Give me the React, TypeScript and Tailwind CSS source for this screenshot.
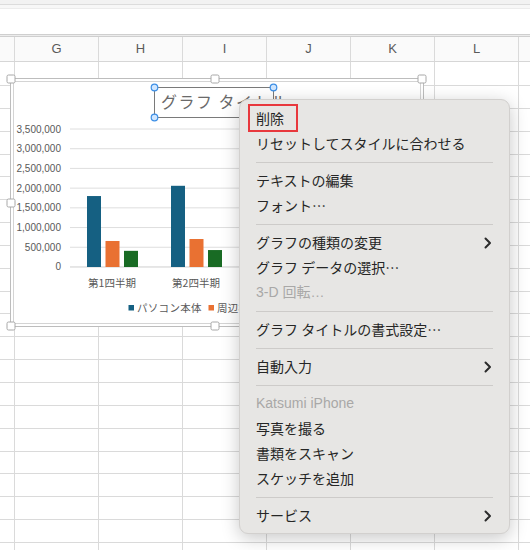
import React from 'react';

const FONT = '"Liberation Sans", "Noto Sans CJK JP", sans-serif';
const JP = '"Noto Sans CJK JP", "Liberation Sans", sans-serif';

const columns = ['G', 'H', 'I', 'J', 'K', 'L', ''];

type MenuEntry =
  | { kind: 'item'; label: string; disabled?: boolean; sub?: boolean; boxed?: boolean }
  | { kind: 'sep' };

const menu: MenuEntry[] = [
  { kind: 'item', label: '削除', boxed: true },
  { kind: 'item', label: 'リセットしてスタイルに合わせる' },
  { kind: 'sep' },
  { kind: 'item', label: 'テキストの編集' },
  { kind: 'item', label: 'フォント…' },
  { kind: 'sep' },
  { kind: 'item', label: 'グラフの種類の変更', sub: true },
  { kind: 'item', label: 'グラフ データの選択…' },
  { kind: 'item', label: '3-D 回転…', disabled: true },
  { kind: 'sep' },
  { kind: 'item', label: 'グラフ タイトルの書式設定…' },
  { kind: 'sep' },
  { kind: 'item', label: '自動入力', sub: true },
  { kind: 'sep' },
  { kind: 'item', label: 'Katsumi iPhone', disabled: true },
  { kind: 'item', label: '写真を撮る' },
  { kind: 'item', label: '書類をスキャン' },
  { kind: 'item', label: 'スケッチを追加' },
  { kind: 'sep' },
  { kind: 'item', label: 'サービス', sub: true },
];

const yLabels = ['3,500,000', '3,000,000', '2,500,000', '2,000,000', '1,500,000', '1,000,000', '500,000', '0'];

// bar values in millions
const quarters = [
  { label: '第1四半期', x: 87, values: [1.8, 0.66, 0.41] },
  { label: '第2四半期', x: 171, values: [2.06, 0.71, 0.43] },
];
const barColors = ['#156082', '#e97132', '#196b24'];

function Chevron() {
  return (
    <svg width="8" height="12" viewBox="0 0 8 12">
      <path d="M1.5 1.5 L6 6 L1.5 10.5" fill="none" stroke="#2b2b2b" strokeWidth="2" strokeLinecap="round" strokeLinejoin="round" />
    </svg>
  );
}

function Handle({ x, y }: { x: number; y: number }) {
  return <rect x={x - 4} y={y - 4} width="8" height="8" rx="1.5" fill="#fff" stroke="#a8a8a8" strokeWidth="1" />;
}

function Chart() {
  const zeroY = 267;
  const step = 19.71;
  const perMillion = (step * 7) / 3.5;
  return (
    <svg className="absolute left-0 top-0" width="430" height="335" viewBox="0 0 430 335">
      <rect x="11" y="79" width="412" height="247" fill="#fff" />
      <rect x="10.5" y="78.5" width="413" height="248" fill="none" stroke="#bdbdbd" />
      <rect x="13.5" y="81.5" width="407" height="242" fill="none" stroke="#d4d4d4" />
      {yLabels.map((l, i) => {
        const y = 129 + i * step;
        return (
          <g key={l}>
            <line x1="70" x2="410" y1={y} y2={y} stroke={i === 7 ? '#cfcfcf' : '#dedede'} strokeWidth="1" />
            <text x="61" y={y + 3.5} textAnchor="end" fontSize="10" fill="#595959" fontFamily={FONT}>
              {l}
            </text>
          </g>
        );
      })}
      {quarters.map((q) => (
        <g key={q.label}>
          {q.values.map((v, i) => {
            const h = v * perMillion;
            return <rect key={i} x={q.x + i * 18.5} y={zeroY - h} width="14" height={h} fill={barColors[i]} />;
          })}
          <text x={q.x + 25} y="287" textAnchor="middle" fontSize="10.5" fill="#595959" fontFamily={JP}>
            {q.label}
          </text>
        </g>
      ))}
      <rect x="128.5" y="305" width="5.5" height="5.5" fill="#156082" />
      <text x="137" y="312" fontSize="10.5" fill="#595959" fontFamily={JP} letterSpacing="0.3">
        パソコン本体
      </text>
      <rect x="208.5" y="305" width="5.5" height="5.5" fill="#e97132" />
      <text x="217" y="312" fontSize="10.5" fill="#595959" fontFamily={JP} letterSpacing="0.3">
        周辺機器
      </text>
      {/* title box */}
      <rect x="154.5" y="87.5" width="119" height="30" fill="none" stroke="#7a7a7a" />
      <text x="161" y="108" fontSize="16" fill="#6a6a6a" fontFamily={JP} letterSpacing="1.5">
        グラフ タイトル
      </text>
      {[
        [154.5, 87.5],
        [273.5, 87.5],
        [154.5, 117.5],
        [273.5, 117.5],
      ].map(([cx, cy], i) => (
        <circle key={i} cx={cx} cy={cy} r="3.3" fill="#cfe6ff" stroke="#3d8fe6" strokeWidth="1.2" />
      ))}
      <Handle x={11} y={79} />
      <Handle x={215} y={79} />
      <Handle x={422} y={79} />
      <Handle x={11} y={203} />
      <Handle x={422} y={203} />
      <Handle x={11} y={326} />
      <Handle x={215} y={326} />
      <Handle x={422} y={326} />
    </svg>
  );
}

function ContextMenu() {
  return (
    <div
      className="absolute left-[239px] top-[99px] w-[271px] rounded-[9px] border border-[#d2d0ce] bg-[#e7e6e4] pt-[6px] pb-[5px] shadow-[0_4px_18px_rgba(0,0,0,0.22)]"
      style={{ fontFamily: JP }}
    >
      {menu.map((m, i) =>
        m.kind === 'sep' ? (
          <div key={i} className="flex h-[12px] items-center px-[16px]">
            <div className="h-px w-[240px] bg-[#cdcbc9]" />
          </div>
        ) : (
          <div
            key={i}
            className={`relative flex h-[25px] items-center justify-between pl-[16px] pr-[17px] text-[14px] ${
              m.disabled ? 'text-[#a9a8a7]' : 'text-[#262626]'
            }`}
          >
            <span style={{ fontFamily: m.label.startsWith('K') || m.label.startsWith('3') ? FONT : JP }}>{m.label}</span>
            {m.sub && <Chevron />}
            {m.boxed && (
              <div className="absolute left-[8px] top-[-2px] h-[28px] w-[50px] border-2 border-[#e8383d]" />
            )}
          </div>
        ),
      )}
    </div>
  );
}

function Row({ h }: { h: string }) {
  return (
    <div className={`flex ${h} border-b border-[#dadada]`}>
      <div className="w-[15px] shrink-0 border-r border-[#dadada]" />
      {columns.map((c, i) => (
        <div key={i} className="w-[84px] shrink-0 border-r border-[#dadada]" />
      ))}
    </div>
  );
}

export default function App() {
  return (
    <div className="relative h-[550px] w-[530px] overflow-hidden bg-white" style={{ fontFamily: FONT }}>
      <div className="h-[5px] border-b border-[#dcdcdc] bg-[#f2f2f2]" />
      <div className="h-[4px] border-b border-[#ececec] bg-[#f7f7f7]" />
      <div className="h-[25px] bg-white" />
      <div className="h-[3px] border-y border-[#cfcfcf] bg-[#ececec]" />
      <div className="flex h-[25px] border-b border-[#d6d6d6] bg-[#fafafa]">
        <div className="w-[15px] shrink-0 border-r border-[#dadada]" />
        {columns.map((c, i) => (
          <div key={i} className="flex w-[84px] shrink-0 items-center justify-center border-r border-[#dadada] text-[13px] text-[#5a5a5a]">
            {c}
          </div>
        ))}
      </div>
      <Row h="h-[24px]" />
      {Array.from({ length: 21 }).map((_, i) => (
        <Row key={i} h="h-[22.85px]" />
      ))}
      <Chart />
      <ContextMenu />
    </div>
  );
}
